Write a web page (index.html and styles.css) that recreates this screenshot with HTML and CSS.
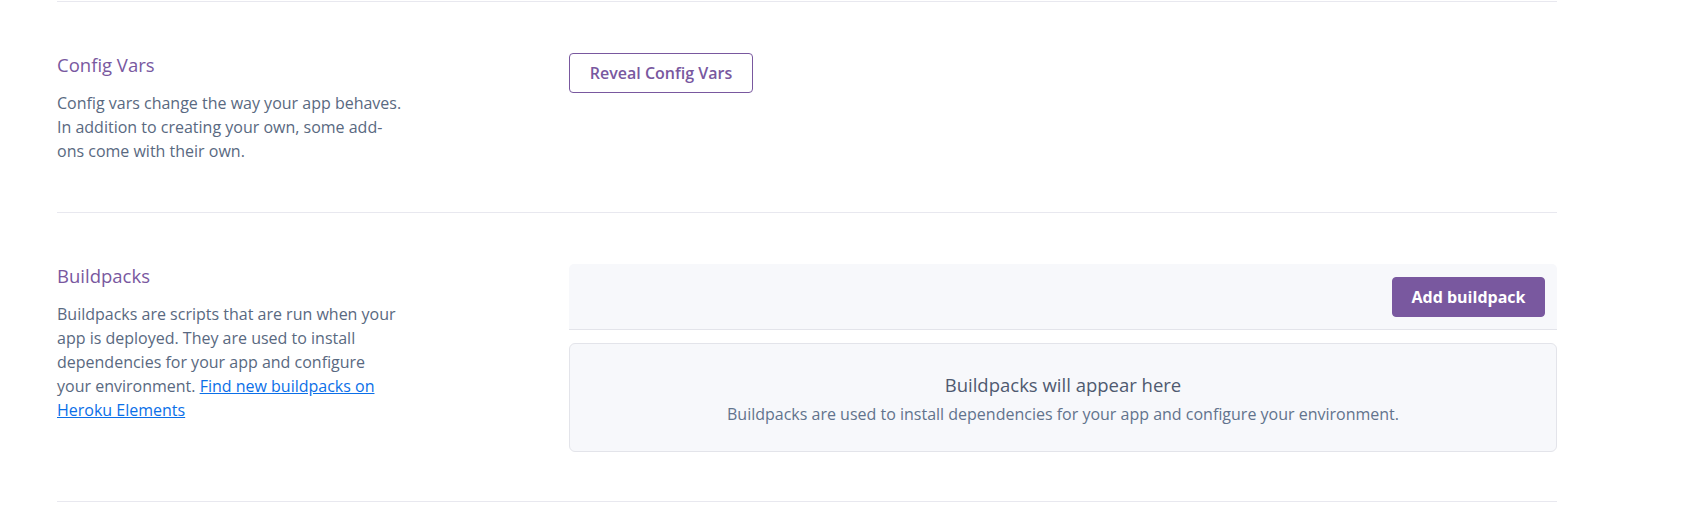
FILE: index.html
```html
<!DOCTYPE html>
<html lang="en">
<head>
<meta charset="utf-8">
<title>Settings</title>
<link rel="stylesheet" href="styles.css">
</head>
<body>
<div class="page">
  <section class="section">
    <div class="info">
      <h3 class="title">Config Vars</h3>
      <p class="desc">Config vars change the way your app behaves. In addition to creating your own, some add-ons come with their own.</p>
    </div>
    <div class="content">
      <button class="btn btn-outline">Reveal Config Vars</button>
    </div>
  </section>
  <section class="section">
    <div class="info">
      <h3 class="title">Buildpacks</h3>
      <p class="desc">Buildpacks are scripts that are run when your app is deployed. They are used to install dependencies for your app and configure your environment. <a href="#" class="link">Find new buildpacks on Heroku Elements</a></p>
    </div>
    <div class="content">
      <div class="toolbar">
        <button class="btn btn-primary">Add buildpack</button>
      </div>
      <div class="empty">
        <div class="empty-title">Buildpacks will appear here</div>
        <div class="empty-sub">Buildpacks are used to install dependencies for your app and configure your environment.</div>
      </div>
    </div>
  </section>
  <div class="end-line"></div>
</div>
</body>
</html>
```

FILE: styles.css
```css
* { box-sizing: border-box; }
html, body { margin: 0; padding: 0; background: #fff; }
body {
  font-family: "Open Sans", "Noto Sans", sans-serif;
  color: #596981;
}
.page {
  width: 1500px;
  margin-left: 57px;
  padding-top: 1px;
}
.section {
  border-top: 1px solid #e8e8ef;
  display: grid;
  grid-template-columns: 512px 1fr;
  padding: 51px 0 49px;
}
.end-line { border-top: 1px solid #e8e8ef; }
.title {
  margin: 0;
  font-size: 18.5px;
  line-height: 24px;
  font-weight: 400;
  color: #79589f;
}
.desc {
  margin: 14px 0 0;
  width: 346px;
  font-size: 16px;
  line-height: 24px;
  color: #596981;
}
.link { color: #0b6fe8; text-decoration: underline; }
.btn {
  font-family: inherit;
  font-size: 16px;
  height: 40px;
  border-radius: 4px;
  padding: 0;
  cursor: pointer;
}
.btn-outline {
  background: #fff;
  border: 1px solid #79589f;
  color: #79589f;
  font-weight: 600;
  width: 184px;
}
.btn-primary {
  background: #79589f;
  border: 1px solid #79589f;
  color: #fff;
  font-weight: 700;
  width: 153px;
}
.toolbar {
  display: flex;
  justify-content: flex-end;
  background: #f7f8fb;
  border-bottom: 1px solid #e3e4ea;
  border-radius: 5px 5px 0 0;
  padding: 13px 12px 12px;
}
.empty {
  margin-top: 13px;
  background: #f7f8fb;
  border: 1px solid #e3e4ea;
  border-radius: 6px;
  padding: 29px 20px 27px;
  text-align: center;
}
.empty-title {
  font-size: 18.5px;
  line-height: 24px;
  color: #4f5a70;
  margin-bottom: 7px;
}
.empty-sub {
  font-size: 16px;
  line-height: 20px;
  color: #62738d;
}
```
